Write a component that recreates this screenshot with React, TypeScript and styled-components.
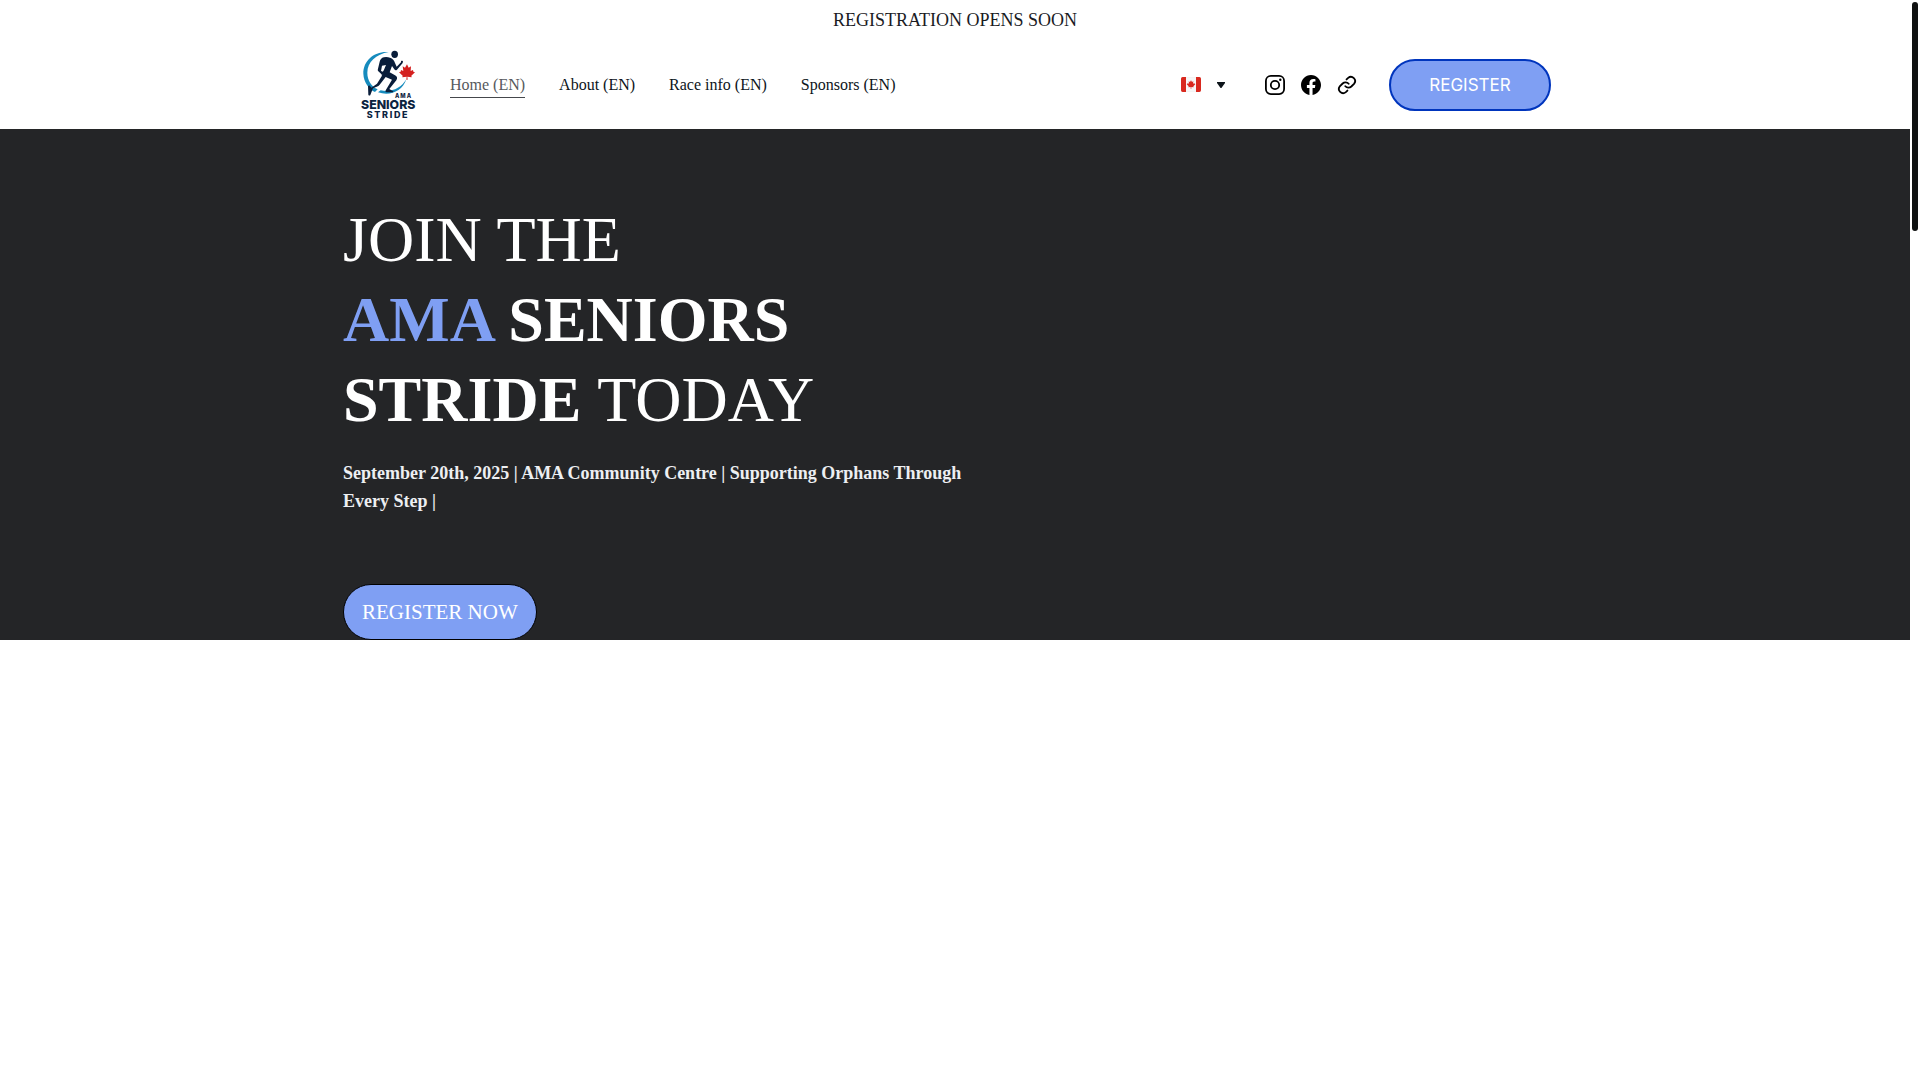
import React from "react";
import styled, { createGlobalStyle } from "styled-components";

const serif = `"Liberation Serif", "Times New Roman", serif`;
const periwinkle = "#7f9ff3";

const GlobalStyle = createGlobalStyle`
  *, *::before, *::after { box-sizing: border-box; }
  body {
    margin: 0;
    background: #ffffff;
    color: #0d141a;
    font-family: ${serif};
  }
`;

const Page = styled.div`
  display: grid;
  grid-template-columns: minmax(0, 1fr) 10px;
  min-height: 100vh;
`;

const Rail = styled.div`
  padding: 2px;
`;

const Thumb = styled.div`
  width: 6px;
  height: 229px;
  border-radius: 3px;
  background: #0f1111;
`;

const Banner = styled.p`
  margin: 0;
  padding: 8px 16px;
  color: #1a1b1f;
  font-size: 18px;
  line-height: 24px;
  text-align: center;
`;

const Container = styled.div`
  width: 100%;
  max-width: 1224px;
  margin: 0 auto;
`;

const HeaderBar = styled(Container)`
  display: flex;
  align-items: center;
  gap: 32px;
  min-height: 89px;
  padding: 8px 16px;
`;

const HomeLink = styled.a`
  display: flex;
  flex: none;
`;

const Nav = styled.nav`
  display: flex;
  flex: 1;
  gap: 34px;
`;

const NavLink = styled.a<{ $active?: boolean }>`
  padding: 4px 0 2px;
  border-bottom: 1px solid ${(p) => (p.$active ? "#45484c" : "transparent")};
  color: ${(p) => (p.$active ? "#56595d" : "#0d141a")};
  font-size: 16px;
  line-height: 20px;
  text-decoration: none;
  white-space: nowrap;
`;

const LanguageButton = styled.button`
  display: flex;
  align-items: center;
  gap: 16px;
  padding: 4px 8px 4px 0;
  border: 0;
  background: none;
  cursor: pointer;
`;

const Socials = styled.div`
  display: flex;
  gap: 16px;
`;

const SocialLink = styled.a`
  display: flex;
  color: #000000;
`;

const Cta = styled.a`
  display: flex;
  align-items: center;
  justify-content: center;
  background: ${periwinkle};
  color: #ffffff;
  text-decoration: none;
  white-space: nowrap;
`;

const HeaderCta = styled(Cta)`
  width: 162px;
  height: 52px;
  border: 2px solid #0035bd;
  border-radius: 26px;
  font-family: Inter, sans-serif;
  font-size: 17px;
  font-weight: 400;
`;

const HeroCta = styled(Cta)`
  width: max-content;
  height: 56px;
  padding: 0 18px;
  border: 1px solid #000000;
  border-radius: 28px;
  font-size: 21px;
`;

const Hero = styled.section`
  padding-top: 71px;
  background: #242527;
`;

const Title = styled.h1`
  max-width: 640px;
  margin: 0;
  color: #ffffff;
  font-size: 64px;
  font-weight: 400;
  line-height: 80px;
`;

const Accent = styled.span`
  color: ${periwinkle};
`;

const Details = styled.p`
  max-width: 640px;
  margin: 19px 0 69px;
  color: #edeff2;
  font-size: 18px;
  font-weight: 700;
  line-height: 28px;
`;

const LogoText = styled.text<{ $size: number; $tracking?: number }>`
  fill: #0c2340;
  font-family: Inter, sans-serif;
  font-size: ${(p) => p.$size}px;
  font-weight: 800;
  letter-spacing: ${(p) => p.$tracking ?? 0}px;
`;

const Logo = () => (
  <svg width="59" height="73" viewBox="57 24 177 219" role="img" aria-label="AMA Seniors Stride">
    <path
      d="M146 36C104 32 69 61 70 101c1 27 18 47 35 55l8-8c-18-9-31-26-31-50 0-32 26-55 64-62Z"
      fill="#168bbd"
    />
    <path d="M114 157c35 13 73-3 85-39-16 27-45 40-77 33Z" fill="#168bbd" />
    <g fill="#091d3a">
      <ellipse cx="164" cy="43" rx="10" ry="11" />
      <path d="M125 54c8-4 17-4 25-1 8 3 13 8 14 14l6 13 13-13c-1-4 2-6 6-3l-1 5-17 20c-3 3-6 2-8-1l-7-10-7 19 16 9c7 4 8 9 4 15l-21 26 10 6c4 2 2 4-2 4h-15c-5-1-6-4-3-8l18-30-19-8-18 23c-2 3-5 5-9 6l-11 5-8 20c-1 3-5 2-6-1l-1-25c1-3 4-3 6-1l4 5 17-12 14-22c1-6 3-13 7-20l6-14-12 2-3 16 8 3 1 7c-3 3-7 2-9-2l-8-7c-2-2-2-5-1-8l5-21c1-5 4-9 8-11Z" />
    </g>
    <path
      d="m201 73 5 10 7-4-1 14 7-3 1 5 5 2-11 10 1 5-13-2 1 9h-4l1-9-13 2 1-5-11-10 5-2 1-5 7 3-2-14 7 4Z"
      fill="#d4201f"
    />
    <LogoText x="165" y="173" $size={17} $tracking={3}>AMA</LogoText>
    <LogoText x="63" y="207" $size={37}>SENIORS</LogoText>
    <LogoText x="80" y="234" $size={27} $tracking={5}>STRIDE</LogoText>
  </svg>
);

const CanadaFlag = () => (
  <svg width="20" height="15" viewBox="0 0 60 45" aria-hidden="true">
    <rect x="1" y="1" width="58" height="43" rx="5" fill="#f7f7f7" stroke="#e3e3e3" />
    <path d="M5 0h10v45H5a5 5 0 0 1-5-5V5a5 5 0 0 1 5-5ZM45 0h10a5 5 0 0 1 5 5v35a5 5 0 0 1-5 5H45Z" fill="#d9291f" />
    <path d="m30 10 3 5 4-2-1 7 4-2 1 3 2 1-6 6 1 3-7-1v5h-2v-5l-7 1 1-3-6-6 2-1 1-3 4 2-1-7 4 2Z" fill="#d9291f" />
  </svg>
);

const Caret = () => (
  <svg width="8" height="6" viewBox="0 0 8 6" aria-hidden="true">
    <path d="M0 0h8v1L4.8 5.4q-.8 1-1.6 0L0 1Z" fill="#0d141a" />
  </svg>
);

const InstagramIcon = () => (
  <svg width="20" height="20" viewBox="0 0 20 20" fill="none" stroke="currentColor" strokeWidth="1.8" aria-hidden="true">
    <rect x="0.9" y="0.9" width="18.2" height="18.2" rx="5" />
    <circle cx="10" cy="10" r="4.2" />
    <circle cx="15.3" cy="4.7" r="1.2" fill="currentColor" stroke="none" />
  </svg>
);

const FacebookIcon = () => (
  <svg width="20" height="20" viewBox="0 0 24 24" fill="currentColor" aria-hidden="true">
    <path d="M24 12.07C24 5.4 18.63 0 12 0S0 5.4 0 12.07C0 18.1 4.39 23.1 10.13 24v-8.44H7.08v-3.49h3.05V9.41c0-3.02 1.79-4.69 4.53-4.69 1.31 0 2.68.24 2.68.24v2.97h-1.51c-1.49 0-1.96.93-1.96 1.89v2.25h3.33l-.53 3.49h-2.8V24C19.61 23.1 24 18.1 24 12.07Z" />
  </svg>
);

const LinkIcon = () => (
  <svg width="20" height="20" viewBox="0 0 24 24" fill="none" stroke="currentColor" strokeWidth="2.2" strokeLinecap="round" aria-hidden="true">
    <path d="M10 13.5a5 5 0 0 0 7.2.3l3.2-3.2a5 5 0 0 0-7-7.1l-1.9 1.8" />
    <path d="M14 10.5a5 5 0 0 0-7.2-.3l-3.2 3.2a5 5 0 0 0 7 7.1l1.9-1.8" />
  </svg>
);

const navItems = ["Home (EN)", "About (EN)", "Race info (EN)", "Sponsors (EN)"];

const socials = [
  { name: "Instagram", Icon: InstagramIcon },
  { name: "Facebook", Icon: FacebookIcon },
  { name: "Website", Icon: LinkIcon },
];

export default function App() {
  return (
    <>
      <GlobalStyle />
      <Page>
        <div>
          <header>
            <Banner>REGISTRATION OPENS SOON</Banner>
            <HeaderBar>
              <HomeLink href="#">
                <Logo />
              </HomeLink>
              <Nav>
                {navItems.map((item, i) => (
                  <NavLink key={item} href="#" $active={i === 0}>
                    {item}
                  </NavLink>
                ))}
              </Nav>
              <LanguageButton type="button" aria-label="Language" aria-haspopup="listbox">
                <CanadaFlag />
                <Caret />
              </LanguageButton>
              <Socials>
                {socials.map(({ name, Icon }) => (
                  <SocialLink key={name} href="#" aria-label={name}>
                    <Icon />
                  </SocialLink>
                ))}
              </Socials>
              <HeaderCta href="#">REGISTER</HeaderCta>
            </HeaderBar>
          </header>
          <main>
            <Hero>
              <Container>
                <Title>
                  JOIN THE
                  <br />
                  <strong>
                    <Accent>AMA </Accent>SENIORS
                    <br />
                    STRIDE{" "}
                  </strong>
                  TODAY
                </Title>
                <Details>
                  September 20th, 2025 | AMA Community Centre | Supporting Orphans Through Every Step |
                </Details>
                <HeroCta href="#">REGISTER NOW</HeroCta>
              </Container>
            </Hero>
          </main>
        </div>
        <Rail aria-hidden="true">
          <Thumb />
        </Rail>
      </Page>
    </>
  );
}
